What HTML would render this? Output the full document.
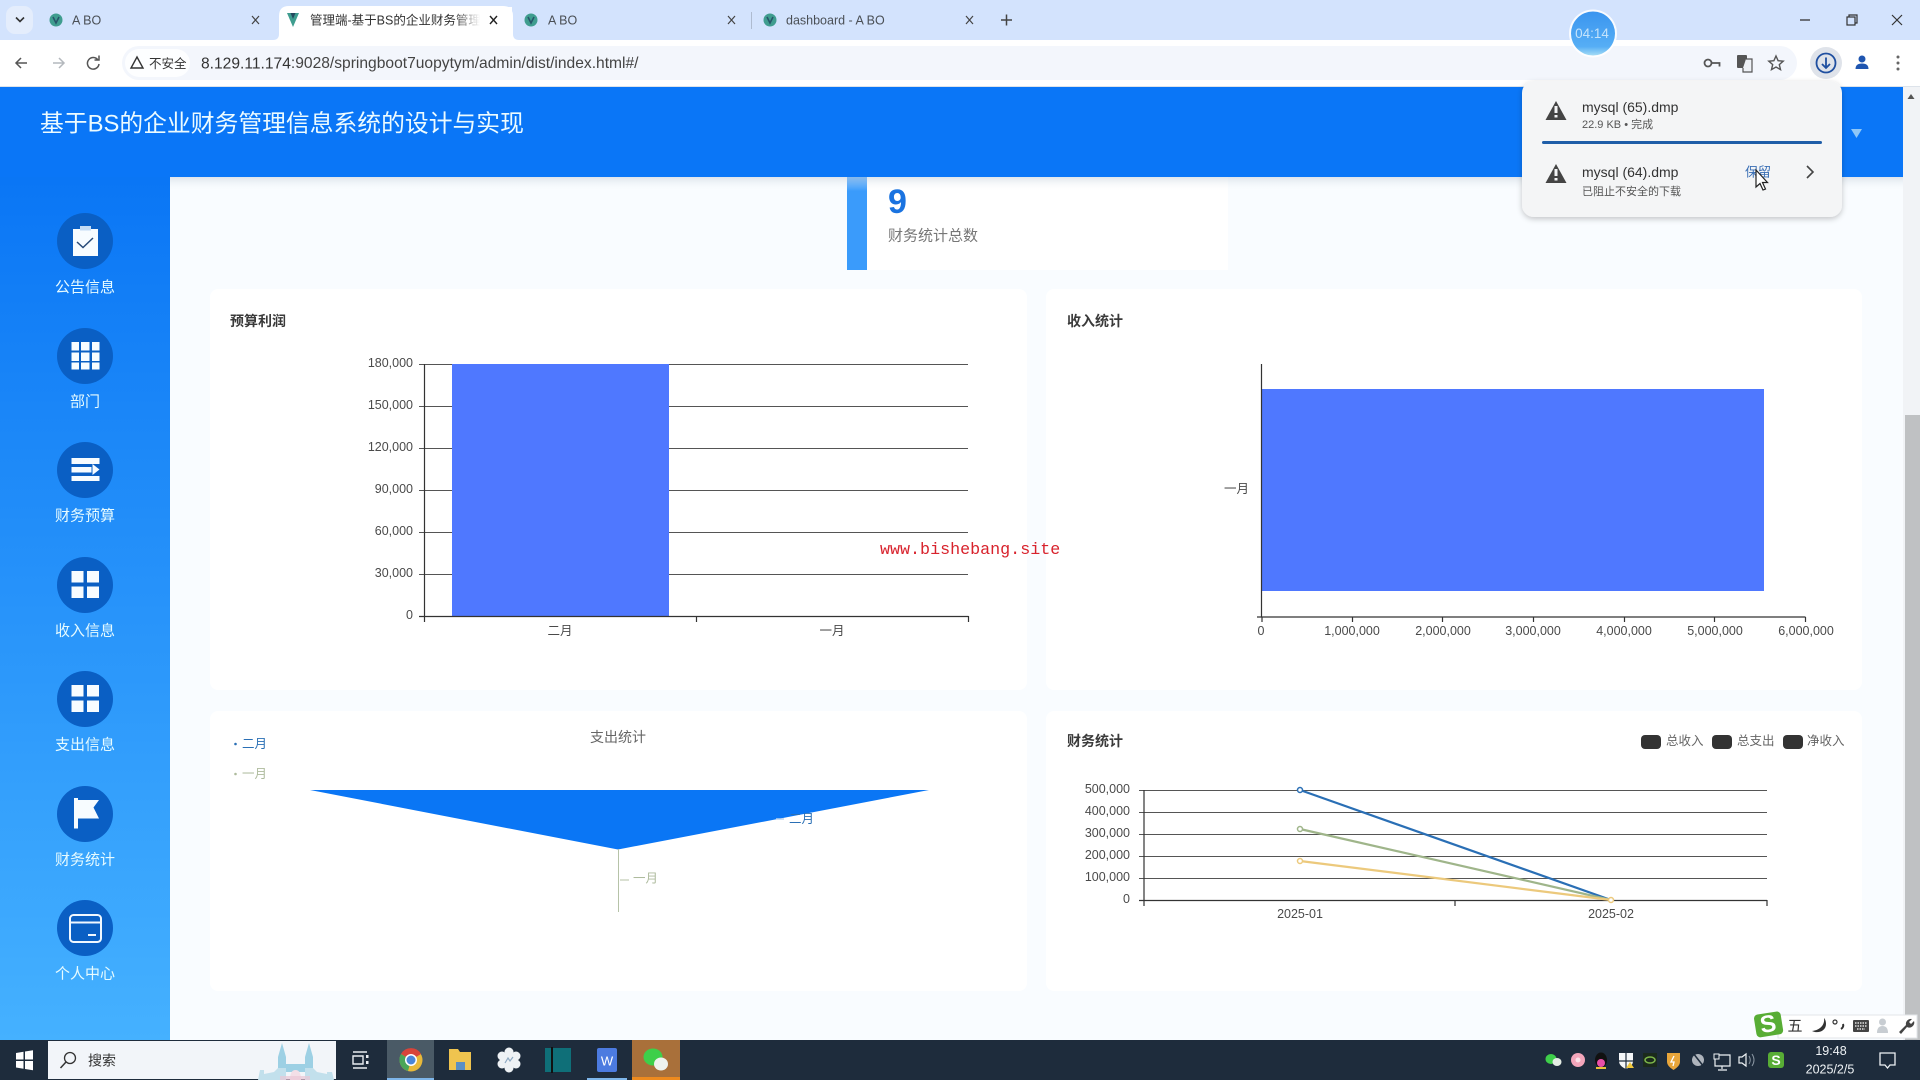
<!DOCTYPE html>
<html lang="zh"><head><meta charset="utf-8"><title>管理端</title>
<style>
html,body{margin:0;padding:0;width:1920px;height:1080px;overflow:hidden;background:#f9fcff}
svg{display:block;position:absolute;left:0;top:0}
text{font-family:"Liberation Sans","Noto Sans CJK SC",sans-serif;dominant-baseline:central;fill:#444}
.ax{font-size:12.5px;fill:#4a4a4a}
.e{text-anchor:end}.m{text-anchor:middle}
.nav{font-size:15px;fill:#e6fbff;text-anchor:middle}
.t{font-size:14px;font-weight:bold;fill:#3a3a3a}
.tab{font-size:12.5px;fill:#4a4f55}
</style></head><body>
<svg width="1920" height="1080" viewBox="0 0 1920 1080" xmlns="http://www.w3.org/2000/svg">
<defs>
<linearGradient id="sb" x1="0" y1="0" x2="0" y2="1"><stop offset="0" stop-color="#0a76f5"/><stop offset="1" stop-color="#45b1ff"/></linearGradient>
<linearGradient id="bub" x1="0" y1="0" x2="0" y2="1"><stop offset="0" stop-color="#3a95ef"/><stop offset="0.8" stop-color="#56aef5"/><stop offset="1" stop-color="#a5dcf5"/></linearGradient>
<linearGradient id="fade" x1="0" y1="0" x2="1" y2="0"><stop offset="0" stop-color="#fff" stop-opacity="0"/><stop offset="1" stop-color="#fff"/></linearGradient>
<linearGradient id="hs" x1="0" y1="0" x2="0" y2="1"><stop offset="0" stop-color="#c8d2dc" stop-opacity=".55"/><stop offset="1" stop-color="#f9fcff" stop-opacity="0"/></linearGradient>
<filter id="sh" x="-10%" y="-10%" width="120%" height="120%"><feDropShadow dx="0" dy="2" stdDeviation="3" flood-color="#000" flood-opacity=".22"/></filter>
<g id="vue"><circle cx="0" cy="0" r="6.5" fill="#3f9d8f"/><path d="M-3 -3L0 3L3 -3" fill="none" stroke="#27566a" stroke-width="1.6"/></g>
<path id="warn" d="M0 -10L10.5 9H-10.5Z" fill="#444"/>
</defs>

<!-- page background -->
<rect width="1920" height="1080" fill="#f9fcff"/>

<!-- browser top -->
<rect width="1920" height="40" fill="#d3e3fd"/>
<rect x="6" y="6" width="27" height="28" rx="9" fill="#e4edfc"/>
<path d="M16 17.5l4 4 4-4" fill="none" stroke="#333" stroke-width="1.6"/>
<use href="#vue" x="56" y="20"/><text class="tab" x="72" y="20.5">A BO</text>
<path d="M252 16l7 8M259 16l-7 8" stroke="#444" stroke-width="1.2"/>
<path d="M273 40q6 0 6-6V16q0-10 10-10h214q10 0 10 10v18q0 6 6 6Z" fill="#fff"/>
<path d="M287 13h12l-6 14Z" fill="#3f9d8f"/><path d="M290.5 13h5l-2.5 6Z" fill="#24495e"/>
<text class="tab" x="310" y="20.5" style="fill:#333">管理端-基于BS的企业财务管理信息</text>
<rect x="480" y="7" width="32" height="30" fill="#fff"/><rect x="455" y="7" width="25" height="30" fill="url(#fade)"/>
<path d="M490 16l7 8M497 16l-7 8" stroke="#222" stroke-width="1.4"/>
<use href="#vue" x="531" y="20"/><text class="tab" x="548" y="20.5">A BO</text>
<path d="M728 16l7 8M735 16l-7 8" stroke="#444" stroke-width="1.2"/>
<rect x="751" y="12" width="1" height="17" fill="#aebbd0"/>
<use href="#vue" x="770" y="20"/><text class="tab" x="786" y="20.5">dashboard - A BO</text>
<path d="M966 16l7 8M973 16l-7 8" stroke="#444" stroke-width="1.2"/>
<path d="M1001 20h11M1006.5 14.5v11" stroke="#444" stroke-width="1.5"/>
<path d="M1800 20h10" stroke="#333" stroke-width="1.3"/>
<rect x="1847" y="17" width="8" height="8" fill="none" stroke="#333" stroke-width="1.2"/><path d="M1849 17v-2h8v8h-2" fill="none" stroke="#333" stroke-width="1.2"/>
<path d="M1892 15l10 10M1902 15l-10 10" stroke="#333" stroke-width="1.2"/>

<rect y="40" width="1920" height="47" fill="#fff"/>
<rect y="86" width="1920" height="1.5" fill="#dde3ea"/>
<path d="M27 63H16m5-5l-5 5 5 5" fill="none" stroke="#555" stroke-width="1.5"/>
<path d="M53 63h11m-5-5l5 5-5 5" fill="none" stroke="#b4b8bd" stroke-width="1.5"/>
<path d="M98 60a5.8 5.8 0 1 0 1 4M99 55.5v4.5h-4.5" fill="none" stroke="#555" stroke-width="1.5"/>
<rect x="122" y="46" width="1675" height="34" rx="17" fill="#f3f6fc"/>
<rect x="125" y="49" width="65" height="28" rx="14" fill="#fdfeff"/>
<path d="M137 57l6 11h-12Z" fill="none" stroke="#333" stroke-width="1.4"/>
<text x="149" y="64" style="font-size:12.5px;fill:#333">不安全</text>
<text x="201" y="63.5" style="font-size:15.6px;fill:#444"><tspan style="fill:#333">8.129.11.174</tspan>:9028/springboot7uopytym/admin/dist/index.html#/</text>
<!-- omnibox icons -->
<circle cx="1708" cy="63" r="3.5" fill="none" stroke="#555" stroke-width="1.8"/><path d="M1711.500 63h8v3.500" fill="none" stroke="#555" stroke-width="1.8"/>
<rect x="1737" y="55" width="10" height="13" rx="1" fill="#555"/><path d="M1746 59h6v13h-9v-4" fill="#eef1f6" stroke="#555" stroke-width="1.2"/>
<path d="M1776 56l2.100 4.700 5.100.5-3.900 3.400 1.200 5-4.500-2.600-4.500 2.600 1.200-5-3.900-3.400 5.100-.5Z" fill="none" stroke="#555" stroke-width="1.4"/>
<circle cx="1826" cy="63" r="16" fill="#dfe3ea"/><circle cx="1826" cy="63" r="9.500" fill="none" stroke="#1f4fa0" stroke-width="1.8"/><path d="M1826 57.500v10m-4-3.500l4 4 4-4" fill="none" stroke="#1f4fa0" stroke-width="1.8"/>
<circle cx="1862" cy="59" r="3.500" fill="#1f55b0"/><path d="M1855.500 69q0-5.500 6.500-5.500t6.500 5.500Z" fill="#1f55b0"/>
<g fill="#666"><circle cx="1898" cy="57" r="1.500"/><circle cx="1898" cy="63" r="1.500"/><circle cx="1898" cy="69" r="1.500"/></g>

<!-- scrollbar -->
<rect x="1903" y="87" width="17" height="953" fill="#f1f3f6"/>
<path d="M1911 94l3.500 5h-7Z" fill="#555"/>
<rect x="1905" y="415" width="15" height="625" fill="#bfc1c3"/>

<!-- stat card -->
<rect x="867" y="177" width="361" height="93" fill="#fff"/>
<rect x="847" y="177" width="20" height="93" fill="#3a9bfb"/>
<text x="888" y="202" style="font-size:34px;font-weight:bold;fill:#1a73e0">9</text>
<text x="888" y="236" style="font-size:15px;fill:#777">财务统计总数</text>

<!-- cards -->
<rect x="210" y="289" width="817" height="401" rx="8" fill="#fff"/>
<rect x="1046" y="289" width="816" height="401" rx="8" fill="#fff"/>
<rect x="210" y="711" width="817" height="280" rx="8" fill="#fff"/>
<rect x="1046" y="711" width="816" height="280" rx="8" fill="#fff"/>

<!-- chart 1 -->
<text class="t" x="230" y="321">预算利润</text>
<path d="M419 364.500H968M419 406.500H968M419 448.500H968M419 490.500H968M419 532.500H968M419 574.500H968" stroke="#555" stroke-width="1"/>
<rect x="452" y="364" width="217" height="252" fill="#4f78ff"/>
<path d="M424.500 364V621M419 616.500H968.500M424.500 616v6M696.500 616v6M968.500 616v6" stroke="#333" stroke-width="1.2" fill="none"/>
<text class="ax e" x="413" y="363">180,000</text><text class="ax e" x="413" y="405">150,000</text><text class="ax e" x="413" y="447">120,000</text><text class="ax e" x="413" y="489">90,000</text><text class="ax e" x="413" y="531">60,000</text><text class="ax e" x="413" y="573">30,000</text><text class="ax e" x="413" y="615">0</text>
<text class="ax m" x="560" y="631">二月</text><text class="ax m" x="832" y="631">一月</text>

<!-- chart 2 -->
<text class="t" x="1067" y="321">收入统计</text>
<rect x="1262" y="389" width="502" height="202" fill="#4f78ff"/>
<path d="M1261.500 364V617M1257 617H1805.500M1262 617v5M1352.500 617v5M1442.500 617v5M1533.500 617v5M1624.500 617v5M1714.500 617v5M1805.500 617v5" stroke="#333" stroke-width="1.2" fill="none"/>
<text class="ax e" x="1249" y="489">一月</text>
<text class="ax m" x="1261" y="631">0</text><text class="ax m" x="1352" y="631">1,000,000</text><text class="ax m" x="1443" y="631">2,000,000</text><text class="ax m" x="1533" y="631">3,000,000</text><text class="ax m" x="1624" y="631">4,000,000</text><text class="ax m" x="1715" y="631">5,000,000</text><text class="ax m" x="1806" y="631">6,000,000</text>

<!-- watermark -->
<text x="880" y="550.5" style="font-family:'Liberation Mono',monospace;font-size:16.7px;fill:#d8222c">www.bishebang.site</text>

<!-- chart 3 funnel -->
<text class="m" x="618" y="737" style="font-size:14px;fill:#666">支出统计</text>
<circle cx="235.500" cy="744" r="1.3" fill="#2a6fb5"/><text x="242" y="744" style="font-size:12.5px;fill:#2a6fb5">二月</text>
<circle cx="235.500" cy="774" r="1.3" fill="#aebb9d"/><text x="242" y="774" style="font-size:12.5px;fill:#aebb9d">一月</text>
<path d="M310 790H929L618 849.500Z" fill="#0a76f5"/>
<path d="M618.500 849V912" stroke="#b6c3a8" stroke-width="1"/>
<path d="M776 819h8" stroke="#b9d3ef" stroke-width="1.5"/><text x="789" y="819" style="font-size:12.5px;fill:#2a6fb5">二月</text>
<path d="M620 880h9" stroke="#cdd6c2" stroke-width="1.5"/><text x="633" y="878.500" style="font-size:12.5px;fill:#aebb9d">一月</text>

<!-- chart 4 -->
<text class="t" x="1067" y="741">财务统计</text>
<g fill="#333"><rect x="1641" y="735" width="20" height="14" rx="4"/><rect x="1712" y="735" width="20" height="14" rx="4"/><rect x="1783" y="735" width="20" height="14" rx="4"/></g>
<text x="1666" y="741" style="font-size:12.5px;fill:#666">总收入</text><text x="1737" y="741" style="font-size:12.5px;fill:#666">总支出</text><text x="1807" y="741" style="font-size:12.5px;fill:#666">净收入</text>
<path d="M1139 790.500H1767M1139 812.500H1767M1139 834.500H1767M1139 856.500H1767M1139 878.500H1767" stroke="#555" stroke-width="1" fill="none"/>
<path d="M1144 790V905M1139 900.500H1767M1144 900v6M1455 900v6M1767 900v6" stroke="#333" stroke-width="1.2" fill="none"/>
<path d="M1300 790L1611 900" stroke="#2a6fb5" stroke-width="2.2" fill="none"/>
<path d="M1300 829L1611 900" stroke="#9fb58a" stroke-width="2.2" fill="none"/>
<path d="M1300 861L1611 900" stroke="#ecc97c" stroke-width="2.2" fill="none"/>
<g fill="#fff" stroke-width="1.5"><circle cx="1300" cy="790" r="2.5" stroke="#2a6fb5"/><circle cx="1300" cy="829" r="2.5" stroke="#9fb58a"/><circle cx="1300" cy="861" r="2.5" stroke="#ecc97c"/><circle cx="1611" cy="900" r="2.5" stroke="#ecc97c"/></g>
<text class="ax e" x="1130" y="789">500,000</text><text class="ax e" x="1130" y="811">400,000</text><text class="ax e" x="1130" y="833">300,000</text><text class="ax e" x="1130" y="855">200,000</text><text class="ax e" x="1130" y="877">100,000</text><text class="ax e" x="1130" y="899">0</text>
<text class="ax m" x="1300" y="914">2025-01</text><text class="ax m" x="1611" y="914">2025-02</text>

<!-- header -->
<rect x="170" y="177" width="1733" height="14" fill="url(#hs)"/>
<rect y="87" width="1903" height="90" fill="#0a76f7"/>
<text x="40" y="124" style="font-size:23.800px;fill:#ecfbff">基于BS的企业财务管理信息系统的设计与实现</text>
<path d="M1851 129h11l-5.500 9Z" fill="#8fc7f7"/>

<!-- sidebar -->
<rect y="177" width="170" height="863" fill="url(#sb)"/>
<g fill="#0a5fc4">
<circle cx="85" cy="241" r="28"/><circle cx="85" cy="356" r="28"/><circle cx="85" cy="470" r="28"/><circle cx="85" cy="585" r="28"/><circle cx="85" cy="699" r="28"/><circle cx="85" cy="814" r="28"/><circle cx="85" cy="928" r="28"/>
</g>
<!-- icon 1 clipboard -->
<rect x="73" y="229" width="25" height="27" fill="#f7fcff"/><rect x="80" y="226" width="11" height="4.500" fill="#c4dcf4"/>
<path d="M77 242l6 5.500 10-9.500" fill="none" stroke="#274a78" stroke-width="1.5"/>
<!-- icon 2 grid -->
<g fill="#f7fcff"><rect x="71.500" y="342" width="7.500" height="8.500"/><rect x="81" y="342" width="8.500" height="8.500"/><rect x="92" y="342" width="7.500" height="8.500"/><rect x="71.500" y="352.500" width="7.500" height="8.500"/><rect x="81" y="352.500" width="8.500" height="8.500"/><rect x="92" y="352.500" width="7.500" height="8.500"/><rect x="71.500" y="362.500" width="7.500" height="7"/><rect x="81" y="362.500" width="8.500" height="7"/><rect x="92" y="362.500" width="7.500" height="7"/></g>
<!-- icon 3 list -->
<g fill="#f7fcff"><rect x="71.500" y="458" width="28" height="6"/><rect x="71.500" y="467" width="20" height="5.500"/><rect x="71.500" y="476" width="28" height="5"/><path d="M92.500 464l7 5.500-7 5.500Z"/></g>
<!-- icon 4 / 5 squares -->
<g fill="#f7fcff"><rect x="71.500" y="571" width="12" height="11.500"/><rect x="87" y="571" width="12" height="11.500"/><rect x="71.500" y="586.500" width="12" height="11.500"/><rect x="87" y="586.500" width="12" height="11.500"/>
<rect x="71.500" y="685" width="12" height="11.500"/><rect x="87" y="685" width="12" height="11.500"/><rect x="71.500" y="700.500" width="12" height="11.500"/><rect x="87" y="700.500" width="12" height="11.500"/></g>
<!-- icon 6 flag -->
<path d="M74 798h4v2h21l-5.500 7.500 5.500 11H78v10h-4Z" fill="#f7fcff"/>
<!-- icon 7 card -->
<rect x="70" y="915" width="31" height="27" rx="3.500" fill="none" stroke="#f0f7ff" stroke-width="2"/><path d="M70 922.500h31M88 935h8" stroke="#f0f7ff" stroke-width="2"/>
<text class="nav" x="85" y="287.500">公告信息</text><text class="nav" x="85" y="402">部门</text><text class="nav" x="85" y="516">财务预算</text><text class="nav" x="85" y="631">收入信息</text><text class="nav" x="85" y="745">支出信息</text><text class="nav" x="85" y="860">财务统计</text><text class="nav" x="85" y="974">个人中心</text>

<!-- timer bubble -->
<circle cx="1593" cy="33.500" r="24" fill="#fff" opacity=".85"/><circle cx="1593" cy="33.500" r="22" fill="url(#bub)"/>
<text class="m" x="1592" y="33.500" style="font-size:13.500px;fill:#c4e3fb">04:14</text>

<!-- download popup -->
<rect x="1522" y="81" width="320" height="136" rx="12" fill="#f4f5f6" filter="url(#sh)"/>
<use href="#warn" x="1556" y="111"/><use href="#warn" x="1556" y="174"/>
<rect x="1554.500" y="106" width="3" height="7" fill="#f4f5f6"/><rect x="1554.500" y="115" width="3" height="2.500" fill="#f4f5f6"/>
<rect x="1554.500" y="169" width="3" height="7" fill="#f4f5f6"/><rect x="1554.500" y="178" width="3" height="2.500" fill="#f4f5f6"/>
<text x="1582" y="107" style="font-size:14px;fill:#333">mysql (65).dmp</text>
<text x="1582" y="125" style="font-size:11px;fill:#555">22.9 KB • 完成</text>
<rect x="1542" y="141" width="280" height="3" rx="1.500" fill="#1f5ea8"/>
<text x="1582" y="172" style="font-size:14px;fill:#333">mysql (64).dmp</text>
<text x="1582" y="192" style="font-size:11px;fill:#555">已阻止不安全的下载</text>
<text x="1745" y="172" style="font-size:13px;fill:#3a6fb5">保留</text>
<path d="M1807 166l6 6-6 6" fill="none" stroke="#444" stroke-width="1.6"/>
<path d="M1756 170v17l4-3.500 3 6.500 2.500-1-3-6.500h5Z" fill="#fff" stroke="#222" stroke-width="1.2"/>

<!-- IME bar -->
<rect x="1778" y="1015" width="139" height="23" fill="#fff" stroke="#e3e6ea"/>
<g transform="rotate(-9 1768 1024)"><rect x="1755" y="1013" width="27" height="23" rx="4" fill="#58ad35"/><text class="m" x="1768" y="1024.500" style="font-size:24px;font-weight:bold;fill:#fff">S</text></g>
<text class="m" x="1795" y="1026.500" style="font-size:15px;fill:#333">五</text>
<path d="M1824 1018c1 6-3 12-12 13 6 3 14 0 14-7 0-3-1-5-2-6Z" fill="#333"/>
<circle cx="1835" cy="1022" r="2" fill="none" stroke="#333" stroke-width="1.2"/><path d="M1843 1024q1 3-2 5" fill="none" stroke="#333" stroke-width="2"/>
<rect x="1853" y="1020" width="16" height="12" rx="1" fill="#444"/><path d="M1855 1023h12M1855 1026h12M1857 1029h8" stroke="#fff" stroke-width="1.2" stroke-dasharray="1.5 1"/>
<circle cx="1882.500" cy="1022" r="3.500" fill="#c8cdd2"/><path d="M1877 1033q0-7 5.500-7t5.500 7Z" fill="#c8cdd2"/>
<path d="M1899 1032l7-7a5 5 0 0 1 6-6l-3 3 2 2 3-3a5 5 0 0 1-7 6l-6 7Z" fill="#444"/>

<!-- taskbar -->
<rect y="1040" width="1920" height="40" fill="#1e2c3c"/>
<g fill="#fff"><path d="M16 1053l7.500-1.200v7.700H16Z"/><path d="M25 1051.500l8-1.300v9.300h-8Z"/><path d="M16 1061h7.500v7.700L16 1067.500Z"/><path d="M25 1061h8v9.300l-8-1.300Z"/></g>
<rect x="48" y="1041" width="288" height="38" fill="#f2f5f9"/>
<circle cx="70" cy="1058" r="5.500" fill="none" stroke="#333" stroke-width="1.3"/><path d="M66 1062l-5.500 6" stroke="#333" stroke-width="1.5"/>
<text x="88" y="1060.500" style="font-size:14px;fill:#333">搜索</text>
<!-- castle -->
<g fill="#9dd0e4">
<path d="M278 1057l2-7 2-7 2 7 2 7v13h-8Z"/><path d="M305 1057l2-7 2-7 2 7 2 7v13h-8Z"/>
<path d="M286 1064h19v8h-19Z"/>
</g>
<g fill="#c2e0ec"><path d="M258 1080l2-10h4v4l10-2 4-4h8v12h19v-12h8l4 4 10 2v-2h5l2 8Z"/></g>
<path d="M290 1080q0-10 5.500-10t5.500 10Z" fill="#f3dfe7"/>
<path d="M280 1076h30v4h-30Z" fill="#e9c6d6" opacity=".7"/>
<path d="M353 1052h14M353 1068h14M353 1056h10v8h-10Z" fill="none" stroke="#e8edf2" stroke-width="1.4"/><rect x="366" y="1055" width="2.500" height="3" fill="#e8edf2"/><rect x="366" y="1061" width="2.500" height="3" fill="#e8edf2"/>
<rect x="387" y="1040" width="47" height="40" fill="#4a5a66"/><rect x="387" y="1078" width="47" height="2" fill="#7eb6ea"/>
<circle cx="411" cy="1060" r="11.500" fill="#e8b93a"/><path d="M411 1060L401 1054A11.500 11.500 0 0 1 421 1054Z" fill="#d8443a"/><path d="M411 1060L401 1054A11.500 11.500 0 0 0 408 1071Z" fill="#4aa557"/><circle cx="411" cy="1060" r="6" fill="#fff"/><circle cx="411" cy="1060" r="4.500" fill="#4a86d8"/>
<path d="M449 1049h9l2 3h11v18h-22Z" fill="#efc44f"/><rect x="456" y="1062" width="9" height="8" fill="#5a8fc4"/>
<g fill="#eef2f5"><circle cx="509" cy="1052" r="4.500"/><circle cx="509" cy="1068" r="4.500"/><circle cx="502" cy="1056" r="4.500"/><circle cx="516" cy="1056" r="4.500"/><circle cx="502" cy="1064" r="4.500"/><circle cx="516" cy="1064" r="4.500"/><circle cx="509" cy="1060" r="6"/></g><path d="M505 1063l3-5 2 3 3-4" fill="none" stroke="#8ea9c2" stroke-width="1.2"/>
<rect x="545" y="1048" width="26" height="24" fill="#0f6f78"/><rect x="551" y="1047" width="2" height="26" fill="#111"/>
<rect x="597" y="1048" width="20" height="24" rx="2" fill="#4c7be0"/><text class="m" x="607" y="1061" style="font-size:13px;fill:#fff">W</text>
<rect x="587" y="1078" width="40" height="2" fill="#7eb6ea"/>
<rect x="632" y="1040" width="48" height="40" fill="#a9703a"/><rect x="632" y="1077" width="48" height="3" fill="#ee8a1e"/>
<ellipse cx="653" cy="1057" rx="9.500" ry="8.500" fill="#3ecf4a"/><ellipse cx="661" cy="1064" rx="7" ry="6.500" fill="#eef2ee"/>

<!-- tray -->
<ellipse cx="1551" cy="1059" rx="5.500" ry="5" fill="#3ecf4a"/><ellipse cx="1557" cy="1062" rx="4.500" ry="4" fill="#e4ece4"/>
<circle cx="1578" cy="1060" r="7" fill="#f3a6bb"/><circle cx="1578" cy="1060" r="2.500" fill="#fbe1e8"/>
<ellipse cx="1601" cy="1060" rx="6" ry="7.500" fill="#111"/><ellipse cx="1601" cy="1063" rx="4" ry="4" fill="#e84fa8"/><rect x="1596" y="1067" width="10" height="2" fill="#e8c23a"/>
<path d="M1619 1053h14v8q0 5-7 8-7-3-7-8Z" fill="#f4f6f8"/><path d="M1626 1053v16M1619 1061h14" stroke="#1e2c3c" stroke-width="1.2"/><path d="M1630 1062l4 6h-8Z" fill="#eec63c"/>
<rect x="1643" y="1053" width="14" height="14" fill="#1b2a1c"/><ellipse cx="1650" cy="1060" rx="5" ry="3" fill="none" stroke="#7db64a" stroke-width="1.5"/>
<path d="M1667 1053h13v9q0 4-6.500 8-6.500-4-6.500-8Z" fill="#e8a53a"/><path d="M1674 1056l-3 6h3l-1 4" stroke="#fff" stroke-width="1.3" fill="none"/>
<circle cx="1698" cy="1060" r="6" fill="#c8cdd2" opacity=".85"/><path d="M1693 1053l11 14" stroke="#1e2c3c" stroke-width="1.5"/>
<path d="M1715 1055h15v11h-15ZM1722 1066v3M1718 1070h9" fill="none" stroke="#eef2f5" stroke-width="1.2"/><rect x="1714" y="1054" width="5" height="5" fill="#1e2c3c" stroke="#eef2f5"/>
<path d="M1739 1057h3l4-3v12l-4-3h-3Z" fill="none" stroke="#eef2f5" stroke-width="1.2"/><path d="M1749 1056q2.500 4 0 8M1752 1054q4 6 0 12" fill="none" stroke="#8a96a2" stroke-width="1"/>
<rect x="1768" y="1052" width="16" height="16" rx="3" fill="#58ad35"/><text class="m" x="1776" y="1060" style="font-size:14px;font-weight:bold;fill:#fff">S</text>
<text class="m" x="1831" y="1051" style="font-size:12.5px;fill:#eef2f5">19:48</text>
<text class="m" x="1830" y="1069.500" style="font-size:12.5px;fill:#eef2f5">2025/2/5</text>
<path d="M1880 1053h15v12h-5l-2.500 3-2.500-3h-5Z" fill="none" stroke="#eef2f5" stroke-width="1.3"/>
</svg>
</body></html>
